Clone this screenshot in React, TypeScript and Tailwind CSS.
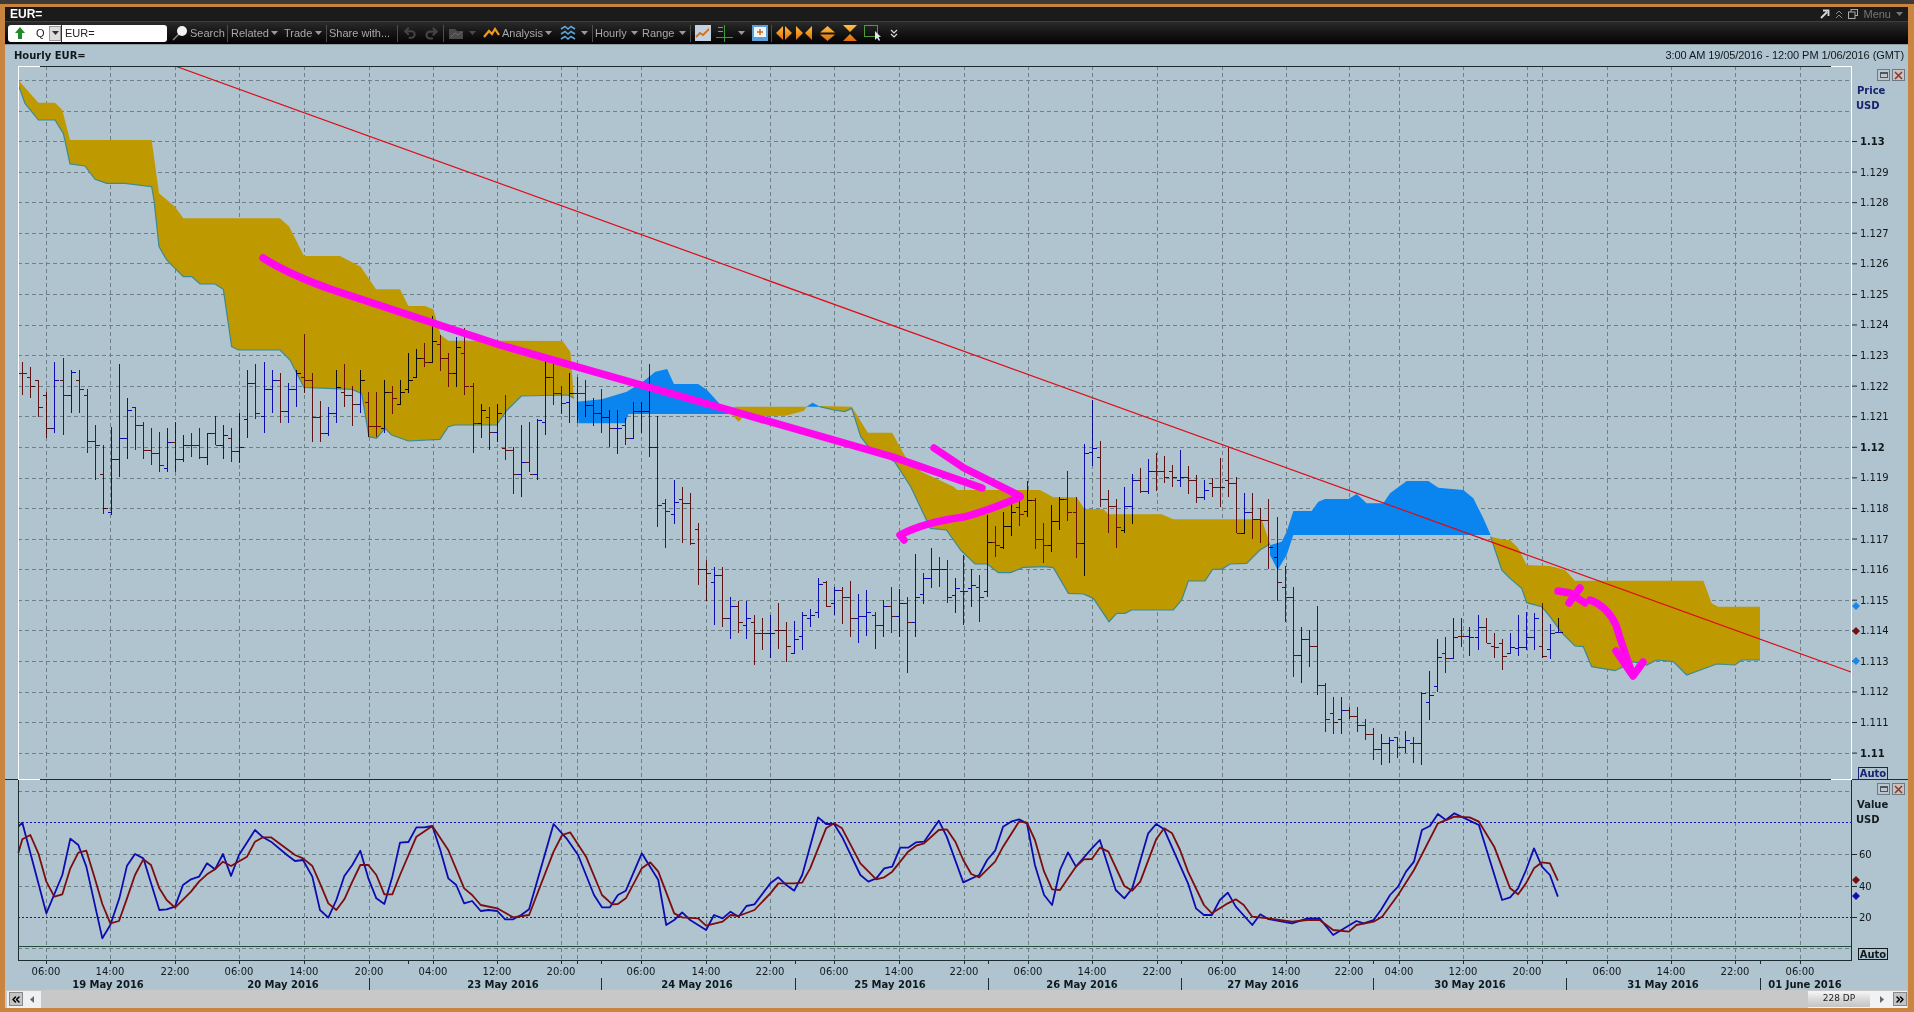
import React from 'react';
import { ChevronsLeft, ChevronsRight, Undo2, Redo2 } from 'lucide-react';

type Pt = number[];

// traced from the chart in page pixels: scale on x, then page offsets
const trace = (pts: Pt[], sx: number, ox: number, oy: number): Pt[] =>
  pts.map(([x, y]) => [ox + x / sx, oy + y / 3]);
const t1 = (pts: Pt[]) => trace(pts, 3, 0, 60);
const t2 = (pts: Pt[]) => trace(pts, 2.8, 500, 340);
const t3 = (pts: Pt[]) => trace(pts, 3, 1040, 400);
const t4 = (pts: Pt[]) => trace(pts, 3, 1500, 460);
const low1 = (pts: Pt[]) => trace(pts, 3, 0, 760);
const low2 = (pts: Pt[]) => trace(pts, 1.633, 0, 800);
const low3 = (pts: Pt[]) => trace(pts, 1.633, 940, 800);
const str = (pts: Pt[]) => pts.map((p) => p.join(',')).join(' ');

// high, low, open, close, up
const barsA = [
  [905, 1005, 940, 940, 0], [920, 1015, 950, 978, 0], [960, 1070, 960, 1042, 0], [995, 1135, 1005, 1105, 0],
  [905, 1118, 1105, 960, 1], [895, 1125, 960, 1005, 0], [930, 1060, 1005, 935, 1], [930, 1060, 960, 988, 0],
  [988, 1180, 1005, 1143, 0], [1095, 1260, 1143, 1155, 0], [1155, 1362, 1243, 1345, 0], [1100, 1365, 1355, 1198, 1],
  [912, 1250, 1198, 1135, 1], [1015, 1198, 1135, 1050, 1], [1040, 1170, 1042, 1095, 0], [1085, 1198, 1095, 1170, 0],
  [1105, 1215, 1170, 1178, 0], [1115, 1235, 1178, 1215, 0], [1105, 1235, 1225, 1145, 1], [1085, 1235, 1145, 1198, 0],
  [1125, 1207, 1198, 1155, 1], [1118, 1190, 1155, 1155, 0], [1105, 1198, 1155, 1190, 0], [1118, 1215, 1190, 1120, 1],
  [1068, 1155, 1118, 1155, 0], [1095, 1198, 1155, 1125, 1], [1105, 1207, 1135, 1172, 0], [1060, 1210, 1172, 1162, 1],
  [930, 1135, 1078, 970, 1], [912, 1078, 970, 1060, 0], [905, 1118, 1068, 988, 1], [930, 1060, 988, 960, 1],
  [940, 1088, 960, 1052, 0], [968, 1088, 1052, 988, 1], [930, 1042, 988, 940, 1], [822, 998, 950, 960, 0],
  [940, 1145, 960, 1070, 0], [1023, 1145, 1070, 1118, 0], [1042, 1128, 1118, 1060, 1], [930, 1088, 1060, 980, 1],
  [912, 1042, 995, 1005, 0], [978, 1098, 1005, 1033, 0], [930, 1060, 1033, 960, 1], [995, 1130, 1025, 1097, 0],
  [995, 1130, 1097, 1097, 0], [960, 1120, 1105, 997, 1], [978, 1062, 997, 1015, 0], [960, 1033, 1033, 995, 1],
  [878, 998, 988, 960, 1], [868, 952, 952, 895, 1], [850, 922, 895, 905, 0], [768, 905, 905, 842, 1],
  [825, 932, 852, 895, 0], [878, 980, 895, 940, 0], [830, 980, 940, 860, 1], [805, 1005, 878, 978, 0],
  [970, 1180, 978, 1088, 0], [1033, 1135, 1088, 1050, 1], [1040, 1170, 1070, 1115, 0], [1033, 1145, 1115, 1060, 1],
];
const barsB = [
  [165, 360, 325, 330, 0], [320, 462, 330, 403, 0], [255, 470, 403, 367, 1], [245, 395, 367, 403, 0],
  [238, 420, 403, 240, 1], [62, 285, 245, 110, 1], [65, 195, 110, 158, 0], [138, 222, 158, 190, 0],
  [100, 248, 185, 158, 1], [112, 250, 158, 158, 0], [120, 232, 158, 195, 0], [175, 258, 195, 218, 1],
  [148, 278, 218, 230, 0], [210, 322, 230, 265, 0], [210, 342, 265, 265, 1], [235, 315, 255, 295, 0],
  [185, 295, 295, 212, 1], [185, 280, 212, 212, 0], [72, 350, 212, 322, 0], [228, 560, 322, 495, 0],
  [478, 625, 490, 512, 0], [420, 552, 522, 485, 1], [440, 608, 478, 490, 0], [460, 615, 490, 608, 0],
  [550, 735, 568, 688, 0], [660, 782, 688, 698, 0], [680, 855, 725, 705, 1], [680, 862, 705, 835, 0],
  [772, 898, 835, 798, 1], [782, 880, 798, 845, 0], [782, 898, 855, 835, 1], [825, 975, 845, 880, 0],
  [835, 930, 880, 880, 0], [825, 955, 880, 880, 1], [790, 928, 870, 870, 0], [845, 965, 870, 918, 0],
  [843, 938, 938, 898, 1], [815, 930, 888, 825, 1], [808, 862, 835, 825, 1], [715, 835, 815, 733, 1],
  [722, 800, 725, 798, 0], [742, 825, 790, 750, 1], [742, 852, 750, 772, 0], [722, 890, 772, 835, 0],
  [762, 910, 835, 827, 1], [750, 888, 827, 815, 1], [815, 928, 825, 855, 0], [780, 890, 855, 798, 1],
  [742, 880, 798, 827, 0], [748, 892, 827, 790, 1], [770, 1000, 790, 845, 0], [642, 890, 845, 772, 1],
  [698, 792, 762, 715, 1], [625, 745, 715, 688, 1], [650, 742, 688, 688, 0], [660, 790, 688, 772, 0],
  [715, 820, 765, 745, 1], [645, 855, 752, 752, 0], [688, 800, 745, 735, 1], [705, 845, 740, 772, 0],
  [525, 772, 752, 605, 1], [558, 652, 605, 615, 0], [515, 628, 622, 558, 1], [488, 588, 558, 515, 1],
  [465, 558, 500, 522, 0], [422, 532, 512, 480, 1], [475, 628, 480, 598, 0], [550, 670, 598, 615, 0],
  [495, 635, 615, 542, 1],
];
const barsC = [
  [292, 390, 362, 298, 1], [213, 362, 298, 335, 0], [292, 473, 335, 428, 0], [132, 527, 428, 160, 1],
  [0, 197, 155, 143, 1], [123, 320, 170, 298, 0], [270, 400, 298, 317, 0], [297, 445, 317, 380, 0],
  [262, 400, 390, 317, 1], [222, 372, 317, 240, 1], [205, 280, 240, 272, 0], [178, 282, 272, 213, 1],
  [158, 272, 213, 213, 0], [168, 250, 213, 232, 0], [195, 262, 213, 232, 0], [150, 262, 240, 232, 1],
  [197, 282, 232, 240, 0], [225, 308, 240, 290, 0], [240, 300, 290, 270, 1], [233, 290, 250, 262, 0],
  [175, 320, 262, 262, 0], [142, 292, 240, 250, 0], [232, 398, 250, 398, 0], [280, 398, 398, 335, 1],
  [280, 418, 335, 358, 0], [325, 428, 358, 360, 0], [297, 508, 360, 440, 0], [350, 602, 470, 545, 0],
  [498, 665, 562, 592, 0], [562, 830, 592, 765, 0], [682, 848, 765, 718, 1], [690, 800, 718, 738, 0],
  [618, 885, 738, 856, 0], [848, 995, 856, 958, 0], [892, 1003, 940, 965, 0], [892, 1003, 958, 930, 1],
  [922, 958, 930, 948, 0], [922, 995, 948, 975, 0], [958, 1020, 975, 1003, 0], [985, 1080, 1003, 1048, 0],
  [1003, 1095, 1048, 1030, 1], [1012, 1090, 1030, 1020, 1], [1012, 1075, 1012, 1040, 0], [992, 1058, 1040, 1020, 1],
  [1012, 1090, 1030, 1030, 0], [875, 1095, 1030, 880, 1], [812, 960, 905, 885, 1], [718, 875, 858, 770, 1],
  [710, 820, 758, 775, 0], [655, 775, 775, 710, 1], [655, 740, 708, 708, 0], [682, 768, 708, 710, 1],
  [645, 750, 710, 682, 1], [655, 728, 682, 728, 0], [700, 775, 738, 740, 0], [718, 810, 728, 768, 0],
  [700, 758, 758, 740, 1], [645, 768, 745, 740, 1], [635, 750, 740, 710, 1], [640, 750, 710, 655, 1],
];
const barsD = [
  [430, 595, 558, 588, 0], [492, 598, 568, 520, 1], [475, 515, 515, 515, 1],
];
const pageBars = [
  ...barsA.map((b) => [60, ...b]),
  ...barsB.map((b) => [340, ...b]),
  ...barsC.map((b) => [400, ...b]),
  ...barsD.map((b) => [460, ...b]),
].map(([oy, h, l, o, c, up]) => ({
  h: Math.round(oy + h / 3),
  l: Math.round(oy + l / 3),
  o: Math.round(oy + o / 3),
  c: Math.round(oy + c / 3),
  up: !!up,
}));

// Cloud outlines
const gold1Top = [...t1([[57, 62], [115, 128], [165, 128], [187, 150], [210, 240], [455, 240], [477, 400], [525, 440], [550, 475], [840, 475], [868, 500], [912, 588], [1020, 588], [1082, 620], [1128, 688], [1200, 688], [1225, 738], [1275, 738], [1300, 748], [1322, 825], [1345, 842], [1500, 842]]), ...t2([[175, 3], [197, 35], [207, 175]])];
const gold1Bottom = [...t1([[57, 80], [75, 130], [115, 180], [165, 180], [190, 220], [210, 312], [255, 318], [285, 358], [320, 370], [375, 370], [455, 380], [462, 420], [477, 560], [500, 600], [550, 650], [575, 650], [600, 672], [645, 672], [670, 688], [695, 860], [715, 870], [840, 870], [870, 900], [912, 982], [1055, 988], [1085, 1000], [1107, 1130], [1130, 1135], [1155, 1105], [1175, 1125], [1225, 1143], [1320, 1138], [1345, 1100], [1365, 1095], [1490, 1095]]), ...t2([[20, 210], [60, 168], [190, 165], [207, 175]])];
const blue1 = t2([[215, 185], [285, 178], [355, 155], [400, 125], [435, 95], [468, 87], [487, 132], [555, 132], [580, 150], [640, 222], [360, 222], [350, 250], [220, 250]]);
const goldSliver = t2([[620, 215], [660, 200], [860, 200], [850, 213], [800, 227], [750, 228], [680, 232], [668, 245], [650, 225]]);
const blueSpeck = t2([[858, 200], [875, 188], [897, 200]]);
const gold2Top = [...t2([[895, 198], [985, 200], [1030, 278], [1098, 278], [1135, 350], [1180, 395], [1270, 440], [1280, 450]]), ...t3([[0, 270], [40, 292], [110, 292], [133, 327], [190, 327], [205, 343], [365, 343], [400, 358], [665, 358], [690, 432]])];
const gold2Bottom = [...t2([[895, 200], [935, 210], [965, 215], [985, 205], [1010, 290], [1030, 318], [1105, 365], [1150, 440], [1205, 565], [1250, 570], [1290, 630], [1330, 672], [1365, 672], [1395, 698], [1430, 698], [1465, 682], [1525, 680]]), ...t3([[40, 503], [85, 580], [130, 582], [160, 595], [207, 665], [230, 640], [255, 640], [275, 630], [400, 630], [425, 600], [445, 543], [495, 543], [518, 508], [545, 508], [570, 492], [620, 490], [660, 450], [690, 432]])];
const blue2 = t3([[690, 436], [725, 425], [740, 395], [760, 333], [815, 333], [835, 305], [855, 297], [925, 297], [950, 282], [980, 310], [1030, 310], [1050, 280], [1100, 243], [1165, 243], [1195, 263], [1270, 270], [1300, 295], [1330, 355], [1352, 405], [760, 405], [740, 465], [713, 510], [690, 465]]);
const gold3Top = [...t3([[1352, 410], [1405, 422], [1430, 440]]), ...t4([[0, 240], [30, 240], [55, 265], [80, 315], [150, 318], [195, 330], [225, 362], [610, 362], [635, 430], [655, 440], [780, 440], [780, 600]])];
const gold3Bottom = [...t3([[1352, 410], [1385, 510]]), ...t4([[30, 355], [65, 385], [80, 428], [125, 440], [150, 470], [185, 518], [225, 558], [250, 560], [275, 620], [345, 632], [400, 605], [440, 615], [470, 600], [520, 605], [560, 645], [650, 612], [705, 615], [725, 600], [780, 600]])];

// Stochastic lines
const blueLine = [
  ...low1([[55, 200], [67, 188], [139, 460], [187, 345], [211, 236], [235, 255], [259, 320], [307, 535], [331, 495], [358, 415], [381, 317], [405, 282], [430, 295], [478, 450], [500, 448], [525, 440], [549, 375], [573, 358], [597, 350], [621, 310], [645, 328], [669, 282], [693, 348], [717, 285], [765, 210], [789, 232], [813, 245], [861, 285], [885, 303], [909, 300], [937, 350], [960, 450], [985, 473], [1009, 420], [1033, 348], [1057, 315], [1081, 272], [1105, 355], [1129, 415], [1153, 432], [1177, 350], [1200, 248]]),
  ...low2([[667, 126], [680, 82], [693, 82], [706, 78], [719, 150], [732, 235], [745, 255], [758, 310], [771, 303], [785, 333], [798, 330], [812, 333], [825, 358], [838, 358], [851, 345], [864, 328], [904, 72], [925, 115], [944, 165], [970, 285], [983, 322], [996, 322], [1009, 285], [1022, 272], [1048, 160], [1075, 240], [1088, 375], [1101, 360], [1114, 337], [1127, 360], [1140, 375], [1153, 390], [1166, 345], [1180, 355], [1193, 335], [1206, 350], [1219, 318], [1232, 313], [1258, 250], [1271, 232], [1284, 255], [1297, 272], [1310, 225], [1336, 52], [1349, 72], [1362, 72], [1375, 110], [1405, 225], [1418, 245], [1431, 235], [1444, 205], [1457, 200], [1470, 143], [1483, 143], [1496, 127], [1509, 125], [1533, 62], [1546, 110]]),
  ...low3([[38, 247], [64, 225], [77, 180], [90, 152], [103, 80], [116, 65], [129, 58], [142, 70], [155, 195], [170, 285], [183, 315], [196, 210], [209, 157], [222, 200], [248, 145], [261, 120], [287, 270], [301, 295], [314, 265], [340, 100], [353, 72], [366, 88], [405, 250], [418, 325], [431, 345], [444, 345], [457, 300], [470, 278], [483, 320], [510, 375], [523, 343], [536, 357], [575, 370], [600, 355], [620, 355], [642, 405], [680, 363], [692, 370], [708, 360], [720, 330], [735, 285], [748, 260], [761, 215], [774, 185], [787, 90], [800, 78], [813, 42], [826, 60], [840, 40], [880, 75], [918, 300], [931, 292], [944, 265], [957, 210], [970, 145], [983, 200], [996, 225], [1009, 290]]),
];
const redLine = [
  ...low1([[55, 278], [67, 238], [91, 225], [115, 280], [139, 365], [163, 410], [187, 403], [211, 325], [235, 278], [259, 272], [283, 350], [307, 432], [331, 490], [357, 483], [381, 415], [405, 345], [430, 298], [453, 315], [478, 385], [500, 420], [525, 443], [573, 395], [597, 365], [621, 343], [645, 328], [669, 305], [693, 318], [741, 290], [765, 245], [789, 232], [813, 232], [885, 285], [909, 295], [937, 318], [960, 370], [985, 430], [1009, 450], [1033, 418], [1057, 365], [1081, 315], [1105, 315], [1129, 345], [1153, 403], [1177, 403], [1200, 345]]),
  ...low2([[680, 110], [706, 78], [732, 150], [758, 265], [771, 285], [785, 315], [812, 325], [838, 352], [864, 345], [904, 155], [918, 105], [931, 97], [957, 170], [983, 285], [1000, 313], [1009, 312], [1022, 295], [1048, 205], [1062, 187], [1075, 215], [1101, 340], [1114, 352], [1140, 355], [1153, 377], [1180, 365], [1193, 345], [1206, 348], [1232, 330], [1258, 280], [1271, 250], [1297, 250], [1310, 248], [1323, 205], [1349, 85], [1362, 70], [1375, 85], [1405, 190], [1431, 238], [1444, 232], [1457, 215], [1483, 155], [1496, 137], [1509, 130], [1533, 90], [1546, 88]]),
  ...low3([[12, 90], [25, 125], [38, 180], [51, 222], [64, 232], [90, 185], [103, 140], [129, 65], [142, 68], [155, 120], [170, 215], [183, 268], [196, 270], [209, 235], [222, 200], [235, 178], [248, 177], [261, 143], [275, 155], [301, 258], [314, 272], [327, 245], [353, 118], [366, 85], [379, 100], [392, 150], [405, 215], [431, 315], [444, 340], [470, 310], [483, 298], [496, 315], [510, 350], [536, 355], [575, 365], [600, 360], [620, 360], [642, 390], [668, 395], [680, 375], [708, 365], [722, 350], [748, 285], [774, 210], [813, 70], [840, 50], [865, 52], [880, 65], [905, 140], [931, 265], [944, 283], [957, 250], [970, 205], [983, 187], [996, 190], [1009, 242]]),
];

const timeTicks: [number, string][] = [
  [46, '06:00'], [110, '14:00'], [175, '22:00'], [239, '06:00'], [304, '14:00'], [369, '20:00'], [433, '04:00'],
  [497, '12:00'], [561, '20:00'], [641, '06:00'], [706, '14:00'], [770, '22:00'], [834, '06:00'], [899, '14:00'],
  [964, '22:00'], [1028, '06:00'], [1092, '14:00'], [1157, '22:00'], [1222, '06:00'], [1286, '14:00'], [1349, '22:00'],
  [1399, '04:00'], [1463, '12:00'], [1527, '20:00'], [1607, '06:00'], [1671, '14:00'], [1735, '22:00'], [1800, '06:00'],
];
const gridX = [...timeTicks.map((t) => t[0]), 577, 1542];
const dateLabels: [number, string][] = [
  [108, '19 May 2016'], [283, '20 May 2016'], [503, '23 May 2016'], [697, '24 May 2016'], [890, '25 May 2016'],
  [1082, '26 May 2016'], [1263, '27 May 2016'], [1470, '30 May 2016'], [1663, '31 May 2016'], [1805, '01 June 2016'],
];
const dateTicks = [369, 601, 795, 988, 1181, 1373, 1566, 1760];
const smallTicks = [408, 601, 795, 988, 1181, 1373, 1566, 1760];
const priceLines = Array.from({ length: 23 }, (_, i) => 80.5 + i * 30.58);
const priceLabels = Array.from({ length: 21 }, (_, n) => {
  const y = 141.5 + n * 30.58;
  const bold = n % 10 === 0;
  return { y, bold, text: (1.13 - n * 0.001).toFixed(bold ? 2 : 3) };
});

const Caret = ({ color = '#9a9a9a' }: { color?: string }) => (
  <svg width="7" height="4" viewBox="0 0 7 4" className="shrink-0">
    <polygon points="0,0 7,0 3.5,4" fill={color} />
  </svg>
);
const Sep = ({ className }: { className: string }) => (
  <div className={`h-[17px] w-px shrink-0 bg-[#4d4d4d] ${className}`} />
);

const Diamond = ({ x, y, fill }: { x: number; y: number; fill: string }) => (
  <polygon points={`${x - 4},${y} ${x},${y - 4} ${x + 4},${y} ${x},${y + 4}`} fill={fill} />
);

const PaneButtons = ({ className }: { className: string }) => (
  <div className={`absolute flex gap-[2px] ${className}`}>
    <div className="flex h-[12px] w-[13px] items-center justify-center border border-[#6d7a84] bg-[#bcc6cc]">
      <div className="h-[6px] w-[8px] border border-[#4b5660] border-t-2" />
    </div>
    <div className="flex h-[12px] w-[13px] items-center justify-center border border-[#6d7a84] bg-[#c9c2c0]">
      <svg width="9" height="9" viewBox="0 0 9 9">
        <path d="M1 1 L8 8 M8 1 L1 8" stroke="#8a3a30" strokeWidth="1.6" />
      </svg>
    </div>
  </div>
);

const PricePane = () => (
  <div className="relative h-[714px] shrink-0">
    <svg width="1903" height="714" viewBox="5 66 1903 714" className="block font-['DejaVu_Sans',sans-serif]">
      <g stroke="#6f7f88" strokeDasharray="4 3" shapeRendering="crispEdges">
        {priceLines.map((y) => (
          <line key={y} x1="18" x2="1851" y1={y} y2={y} />
        ))}
        {gridX.map((x) => (
          <line key={x} x1={x + 0.5} x2={x + 0.5} y1="66" y2="779" />
        ))}
      </g>

      <polygon points={str([...gold1Top, ...[...gold1Bottom].reverse()])} fill="#bf9900" />
      <polyline points={str(gold1Bottom)} fill="none" stroke="#3b8a94" strokeWidth="1.2" />
      <polygon points={str(goldSliver)} fill="#bf9900" />
      <polygon points={str(blue1)} fill="#0a84ee" />
      <polygon points={str(blueSpeck)} fill="#0a84ee" />
      <polygon points={str([...gold2Top, ...[...gold2Bottom].reverse()])} fill="#bf9900" />
      <polyline points={str(gold2Bottom)} fill="none" stroke="#3b8a94" strokeWidth="1.2" />
      <polygon points={str(blue2)} fill="#0a84ee" />
      <polygon points={str([...gold3Top, ...[...gold3Bottom].reverse()])} fill="#bf9900" />
      <polyline points={str(gold3Bottom)} fill="none" stroke="#3b8a94" strokeWidth="1.2" />

      <g shapeRendering="crispEdges" className="mix-blend-multiply">
        {pageBars.map((b, i) => {
          const x = Math.round(22.3 + i * 8.04) + 0.5;
          const stroke = b.up ? '#1010d8' : '#8a1818';
          return (
            <path
              key={i}
              d={`M${x} ${b.h}V${b.l}M${x - 4} ${b.o + 0.5}H${x}M${x} ${b.c + 0.5}H${x + 4}`}
              stroke={stroke}
              fill="none"
            />
          );
        })}
      </g>

      <line x1="175" y1="66" x2="1851" y2="672" stroke="#dc0c14" strokeWidth="1.2" />

      <g fill="none" stroke="#ff08ec" strokeLinecap="round" strokeLinejoin="round" strokeWidth="7.5">
        <path d="M263 258 Q290 275 333 290 L500 345 L729 410 L893 457 L982 488" />
        <path d="M934 448 L964 468 L1020 496" />
        <path d="M1020 497 Q990 510 964 517 Q925 522 900 535 L904 540" />
        <path d="M1558 591 L1570 593 L1585 603 M1580 588 L1569 603" />
        <path d="M1590 600 Q1607 606 1616 625 Q1622 645 1632 673" />
        <path d="M1616 651 L1633 676 L1643 662" />
      </g>

      <g stroke="#1c2c30" shapeRendering="crispEdges">
        <line x1="40" x2="1831" y1="66.5" y2="66.5" />
        <line x1="5" x2="18" y1="779.5" y2="779.5" />
        <line x1="40" x2="1831" y1="779.5" y2="779.5" />
        <line x1="1851" x2="1908" y1="779.5" y2="779.5" />
      </g>
      <g stroke="#ffffff" shapeRendering="crispEdges">
        <path d="M40 66.5H18.5V779.5H40" fill="none" />
        <path d="M1831 66.5H1851.5V779.5H1831" fill="none" />
      </g>

      {priceLabels.map((l) => (
        <g key={l.text}>
          <line x1="1852" x2="1857" y1={l.y} y2={l.y} stroke="#1c2c30" />
          <text x="1860" y={l.y} dominantBaseline="central" fill="#10181c" fontWeight={l.bold ? 700 : 400} className="text-[10px]">
            {l.text}
          </text>
        </g>
      ))}
      <text x="1857" y="90" dominantBaseline="central" fill="#16246e" fontWeight="700" className="text-[10px]">Price</text>
      <text x="1856" y="105" dominantBaseline="central" fill="#16246e" fontWeight="700" className="text-[10px]">USD</text>
      <Diamond x={1856} y={606} fill="#1a86e8" />
      <Diamond x={1856} y={631} fill="#701010" />
      <Diamond x={1856} y={661} fill="#1a86e8" />
      <rect x="1858.5" y="767.5" width="29" height="12" fill="none" stroke="#16246e" />
      <text x="1873" y="773.5" dominantBaseline="central" textAnchor="middle" fill="#16246e" fontWeight="700" className="text-[10px]">Auto</text>
    </svg>
    <PaneButtons className="right-[3px] top-[3px]" />
  </div>
);

const IndicatorPane = () => (
  <div className="relative h-[210px] shrink-0">
    <svg width="1903" height="210" viewBox="5 780 1903 210" className="block font-['DejaVu_Sans',sans-serif]">
      <g stroke="#6f7f88" strokeDasharray="4 3" shapeRendering="crispEdges">
        {[791.5, 854.5, 886.5, 948.5].map((y) => (
          <line key={y} x1="18" x2="1851" y1={y} y2={y} />
        ))}
        {gridX.map((x) => (
          <line key={x} x1={x + 0.5} x2={x + 0.5} y1="780" y2="960" />
        ))}
      </g>
      <g stroke="#1414b0" strokeDasharray="2 2" shapeRendering="crispEdges">
        <line x1="18" x2="1851" y1="822.5" y2="822.5" />
        <line x1="18" x2="1851" y1="917.5" y2="917.5" />
      </g>
      <line x1="18" x2="1851" y1="946.5" y2="946.5" stroke="#1f4d3a" shapeRendering="crispEdges" />

      <polyline points={str(blueLine)} fill="none" stroke="#0c0cb0" strokeWidth="1.8" strokeLinejoin="round" />
      <polyline points={str(redLine)} fill="none" stroke="#7c0c10" strokeWidth="1.8" strokeLinejoin="round" />

      <g stroke="#1c2c30" shapeRendering="crispEdges" fill="none">
        <path d="M18.5 780V960.5H1851.5V780" />
        {gridX.map((x) => (
          <line key={x} x1={x + 0.5} x2={x + 0.5} y1="960" y2="964" />
        ))}
        {smallTicks.map((x) => (
          <line key={x} x1={x + 0.5} x2={x + 0.5} y1="960" y2="964" />
        ))}
        {dateTicks.map((x) => (
          <line key={x} x1={x + 0.5} x2={x + 0.5} y1="978" y2="990" />
        ))}
      </g>

      {[[60, 854.5], [40, 886.5], [20, 917.5]].map(([v, y]) => (
        <g key={v}>
          <line x1="1852" x2="1857" y1={y} y2={y} stroke="#1c2c30" />
          <text x="1859" y={y} dominantBaseline="central" fill="#10181c" className="text-[10px]">{v}</text>
        </g>
      ))}
      <text x="1857" y="804" dominantBaseline="central" fill="#141c20" fontWeight="700" className="text-[10px]">Value</text>
      <text x="1856" y="819" dominantBaseline="central" fill="#141c20" fontWeight="700" className="text-[10px]">USD</text>
      <Diamond x={1856} y={880} fill="#701010" />
      <Diamond x={1856} y={896} fill="#1010b0" />
      <rect x="1858.5" y="948.5" width="29" height="11" fill="none" stroke="#10181c" />
      <text x="1873" y="954" dominantBaseline="central" textAnchor="middle" fill="#10181c" fontWeight="700" className="text-[10px]">Auto</text>

      {timeTicks.map(([x, label], i) => (
        <text key={i} x={x} y="971" dominantBaseline="central" textAnchor="middle" fill="#10181c" className="text-[10px]">
          {label}
        </text>
      ))}
      {dateLabels.map(([x, label]) => (
        <text key={label} x={x} y="984" dominantBaseline="central" textAnchor="middle" fill="#10181c" fontWeight="700" className="text-[10px]">
          {label}
        </text>
      ))}
    </svg>
    <PaneButtons className="right-[3px] top-[3px]" />
  </div>
);

const Toolbar = () => (
  <div className="flex h-[22px] shrink-0 items-center bg-gradient-to-b from-[#2a2a2a] to-[#040404] pl-[3px] text-[11px] text-[#a8a8a8]">
    <div className="flex h-[17px] w-[159px] shrink-0 items-center rounded-[3px] bg-white text-[#222]">
      <svg width="10" height="12" viewBox="0 0 10 12" className="ml-[7px] shrink-0">
        <path d="M5 0 L10 6 H7 V12 H3 V6 H0 Z" fill="#1e8a2a" />
      </svg>
      <span className="ml-[11px] w-[13px] shrink-0">Q</span>
      <div className="flex h-[15px] w-[12px] shrink-0 items-center justify-center border border-[#999] bg-[#ddd]">
        <Caret color="#333" />
      </div>
      <div className="h-[17px] w-px shrink-0 bg-[#333]" />
      <span className="ml-[3px]">EUR=</span>
    </div>
    <svg width="16" height="16" viewBox="0 0 16 16" className="ml-[5px] shrink-0">
      <line x1="1" y1="15" x2="7" y2="9" stroke="#8a8a8a" strokeWidth="1.5" />
      <circle cx="10" cy="6" r="5" fill="#f2f2f2" />
    </svg>
    <span className="ml-[2px] w-[35px] shrink-0">Search</span>
    <Sep className="ml-[2px]" />
    <span className="ml-[3px] w-[37px] shrink-0">Related</span>
    <div className="ml-[3px]"><Caret /></div>
    <span className="ml-[6px] w-[28px] shrink-0">Trade</span>
    <div className="ml-[3px]"><Caret /></div>
    <Sep className="ml-[4px]" />
    <span className="ml-[2px] w-[63px] shrink-0 whitespace-nowrap">Share with...</span>
    <Sep className="ml-[5px]" />
    <Undo2 size={14} strokeWidth={3.5} className="ml-[5px] shrink-0 text-[#444]" />
    <Redo2 size={15} strokeWidth={3.5} className="ml-[7px] shrink-0 text-[#444]" />
    <Sep className="ml-[4px]" />
    <svg width="17" height="15" viewBox="0 0 17 15" className="ml-[4px] shrink-0">
      <path d="M1 3 H7 L9 5 H15 V13 H1 Z" fill="#4a4a4a" />
      <path d="M3 11 L7 7 L10 9 L14 6" stroke="#6a6a6a" fill="none" />
    </svg>
    <div className="ml-[4px]"><Caret color="#4a4a4a" /></div>
    <svg width="17" height="12" viewBox="0 0 17 12" className="ml-[7px] shrink-0">
      <path d="M1 10 L6 4 L9 7 L12 2 L16 8" stroke="#f09a1e" strokeWidth="2.2" fill="none" />
    </svg>
    <span className="ml-[2px] w-[38px] shrink-0">Analysis</span>
    <div className="ml-[5px]"><Caret /></div>
    <svg width="16" height="16" viewBox="0 0 16 16" className="ml-[8px] shrink-0">
      <g stroke="#5ea6d8" strokeWidth="1.6" fill="none">
        <path d="M1 4 L5 1.5 L8 4 L11 1.5 L15 4" />
        <path d="M1 9 L5 6.5 L8 9 L11 6.5 L15 9" />
        <path d="M1 14 L5 11.5 L8 14 L11 11.5 L15 14" />
      </g>
    </svg>
    <div className="ml-[5px]"><Caret /></div>
    <Sep className="ml-[4px]" />
    <span className="ml-[2px] w-[31px] shrink-0">Hourly</span>
    <div className="ml-[5px]"><Caret /></div>
    <span className="ml-[4px] w-[31px] shrink-0">Range</span>
    <div className="ml-[6px]"><Caret /></div>
    <Sep className="ml-[4px]" />
    <svg width="16" height="16" viewBox="0 0 16 16" className="ml-[4px] shrink-0">
      <rect width="16" height="16" fill="#c4d2e0" />
      <path d="M1 12 L5 8 L8 10 L14 4" stroke="#d8701a" strokeWidth="1.8" fill="none" />
    </svg>
    <svg width="17" height="17" viewBox="0 0 17 17" className="ml-[5px] shrink-0">
      <path d="M8.5 0 V17 M0 12.5 H17" stroke="#3e9a3e" />
      <path d="M2 2.5 H7 M2 6.5 H7" stroke="#4aa0d8" />
    </svg>
    <div className="ml-[5px]"><Caret /></div>
    <svg width="16" height="16" viewBox="0 0 16 16" className="ml-[7px] shrink-0">
      <rect width="16" height="16" fill="#5aa0dc" />
      <rect x="2" y="2" width="12" height="10" fill="#f4f4f4" />
      <path d="M8 4 V10 M5 7 H11" stroke="#c8701a" strokeWidth="1.5" />
    </svg>
    <Sep className="ml-[3px]" />
    <svg width="16" height="14" viewBox="0 0 16 14" className="ml-[4px] shrink-0">
      <defs>
        <linearGradient id="amber" x1="0" y1="0" x2="0" y2="1">
          <stop offset="0" stopColor="#ffc040" />
          <stop offset="1" stopColor="#e06a08" />
        </linearGradient>
      </defs>
      <path d="M7 0 V14 L0 7 Z M9 0 V14 L16 7 Z" fill="url(#amber)" />
    </svg>
    <svg width="16" height="14" viewBox="0 0 16 14" className="ml-[4px] shrink-0">
      <path d="M0 0 V14 L7 7 Z M16 0 V14 L9 7 Z" fill="url(#amber)" />
    </svg>
    <svg width="15" height="15" viewBox="0 0 15 15" className="ml-[8px] shrink-0">
      <path d="M7.5 0 L15 6.5 H0 Z M0 8.5 H15 L7.5 15 Z" fill="url(#amber)" />
    </svg>
    <svg width="14" height="16" viewBox="0 0 14 16" className="ml-[8px] shrink-0">
      <path d="M0 0 H14 L7 7 Z M7 9 L14 16 H0 Z" fill="url(#amber)" />
    </svg>
    <svg width="17" height="16" viewBox="0 0 17 16" className="ml-[7px] shrink-0">
      <rect x="0.5" y="0.5" width="13" height="11" fill="none" stroke="#4e9a3e" />
      <path d="M11 6 V15 L13 13 L15 16 L16 15 L14.5 12 H17 Z" fill="#dfe6ee" />
    </svg>
    <svg width="8" height="9" viewBox="0 0 8 9" className="ml-[9px] shrink-0">
      <path d="M1 1 L4 4 L7 1 M1 5 L4 8 L7 5" stroke="#dcdcdc" strokeWidth="1.2" fill="none" />
    </svg>
  </div>
);

export default function App() {
  return (
    <div className="h-[1012px] w-[1914px] overflow-hidden border-t-4 border-[#3f3a36] font-['Liberation_Sans',Arial,sans-serif]">
      <div className="flex h-[1008px] flex-col border-x-[5px] border-b-4 border-t-[3px] border-[#c98440] border-r-[6px] bg-[#b0c4d0]">
        <div className="flex h-[15px] shrink-0 items-center justify-between border-b border-[#3e3e3e] bg-[#1b1b1b] pl-[5px] pr-[5px]">
          <span className="text-[12px] font-bold leading-none text-white">EUR=</span>
          <div className="flex items-center text-[#8a8a8a]">
            <svg width="10" height="10" viewBox="0 0 10 10" className="shrink-0">
              <path d="M1 9 L7 3 M3 1.5 H8.5 V7" stroke="#d8d8d8" strokeWidth="1.8" fill="none" />
            </svg>
            <svg width="8" height="9" viewBox="0 0 8 9" className="ml-[5px] shrink-0">
              <path d="M1 4 L4 1 L7 4 M1 8 L4 5 L7 8" stroke="#888" fill="none" />
            </svg>
            <svg width="10" height="10" viewBox="0 0 10 10" className="ml-[5px] shrink-0">
              <rect x="3" y="0.5" width="6.5" height="6" fill="none" stroke="#aaa" />
              <rect x="0.5" y="3" width="6.5" height="6.5" fill="#1b1b1b" stroke="#aaa" />
            </svg>
            <span className="ml-[5px] text-[11px] leading-none text-[#777]">Menu</span>
            <div className="ml-[5px]"><Caret color="#777" /></div>
          </div>
        </div>
        <Toolbar />
        <div className="h-px shrink-0 bg-[#8f9aa2]" />
        <div className="flex h-[21px] shrink-0 items-center justify-between pl-[9px] pr-[4px]">
          <span className="font-['DejaVu_Sans',sans-serif] text-[10px] font-bold text-[#10181c]">Hourly EUR=</span>
          <span className="text-[11px] tracking-[-0.08px] text-[#10181c]">3:00 AM 19/05/2016 - 12:00 PM 1/06/2016 (GMT)</span>
        </div>
        <PricePane />
        <IndicatorPane />
        <div className="flex h-[18px] shrink-0 items-center justify-between bg-[#c8c8c8] pl-[2px] pr-[1px]">
          <div className="flex h-[17px] w-[34px] items-center bg-[#eef0f2] pl-[2px]">
            <div className="flex h-[14px] w-[14px] items-center justify-center border border-[#888] bg-[#c4c4c4]">
              <ChevronsLeft size={13} strokeWidth={3} className="text-black" />
            </div>
            <svg width="4" height="7" viewBox="0 0 4 7" className="ml-[7px]">
              <polygon points="4,0 4,7 0,3.5" fill="#666" />
            </svg>
          </div>
          <div className="flex h-[17px] w-[99px] items-center bg-[#f0f2f4]">
            <div className="flex h-[15px] w-[62px] items-center justify-center bg-gradient-to-b from-[#f4f4f4] via-[#d8d8d8] to-[#c4c4c4] font-['DejaVu_Sans',sans-serif] text-[9px] text-[#222]">
              228 DP
            </div>
            <svg width="4" height="7" viewBox="0 0 4 7" className="ml-[10px]">
              <polygon points="0,0 0,7 4,3.5" fill="#666" />
            </svg>
            <div className="ml-[9px] flex h-[14px] w-[14px] items-center justify-center border border-[#888] bg-[#c4c4c4]">
              <ChevronsRight size={13} strokeWidth={3} className="text-black" />
            </div>
          </div>
        </div>
      </div>
    </div>
  );
}
